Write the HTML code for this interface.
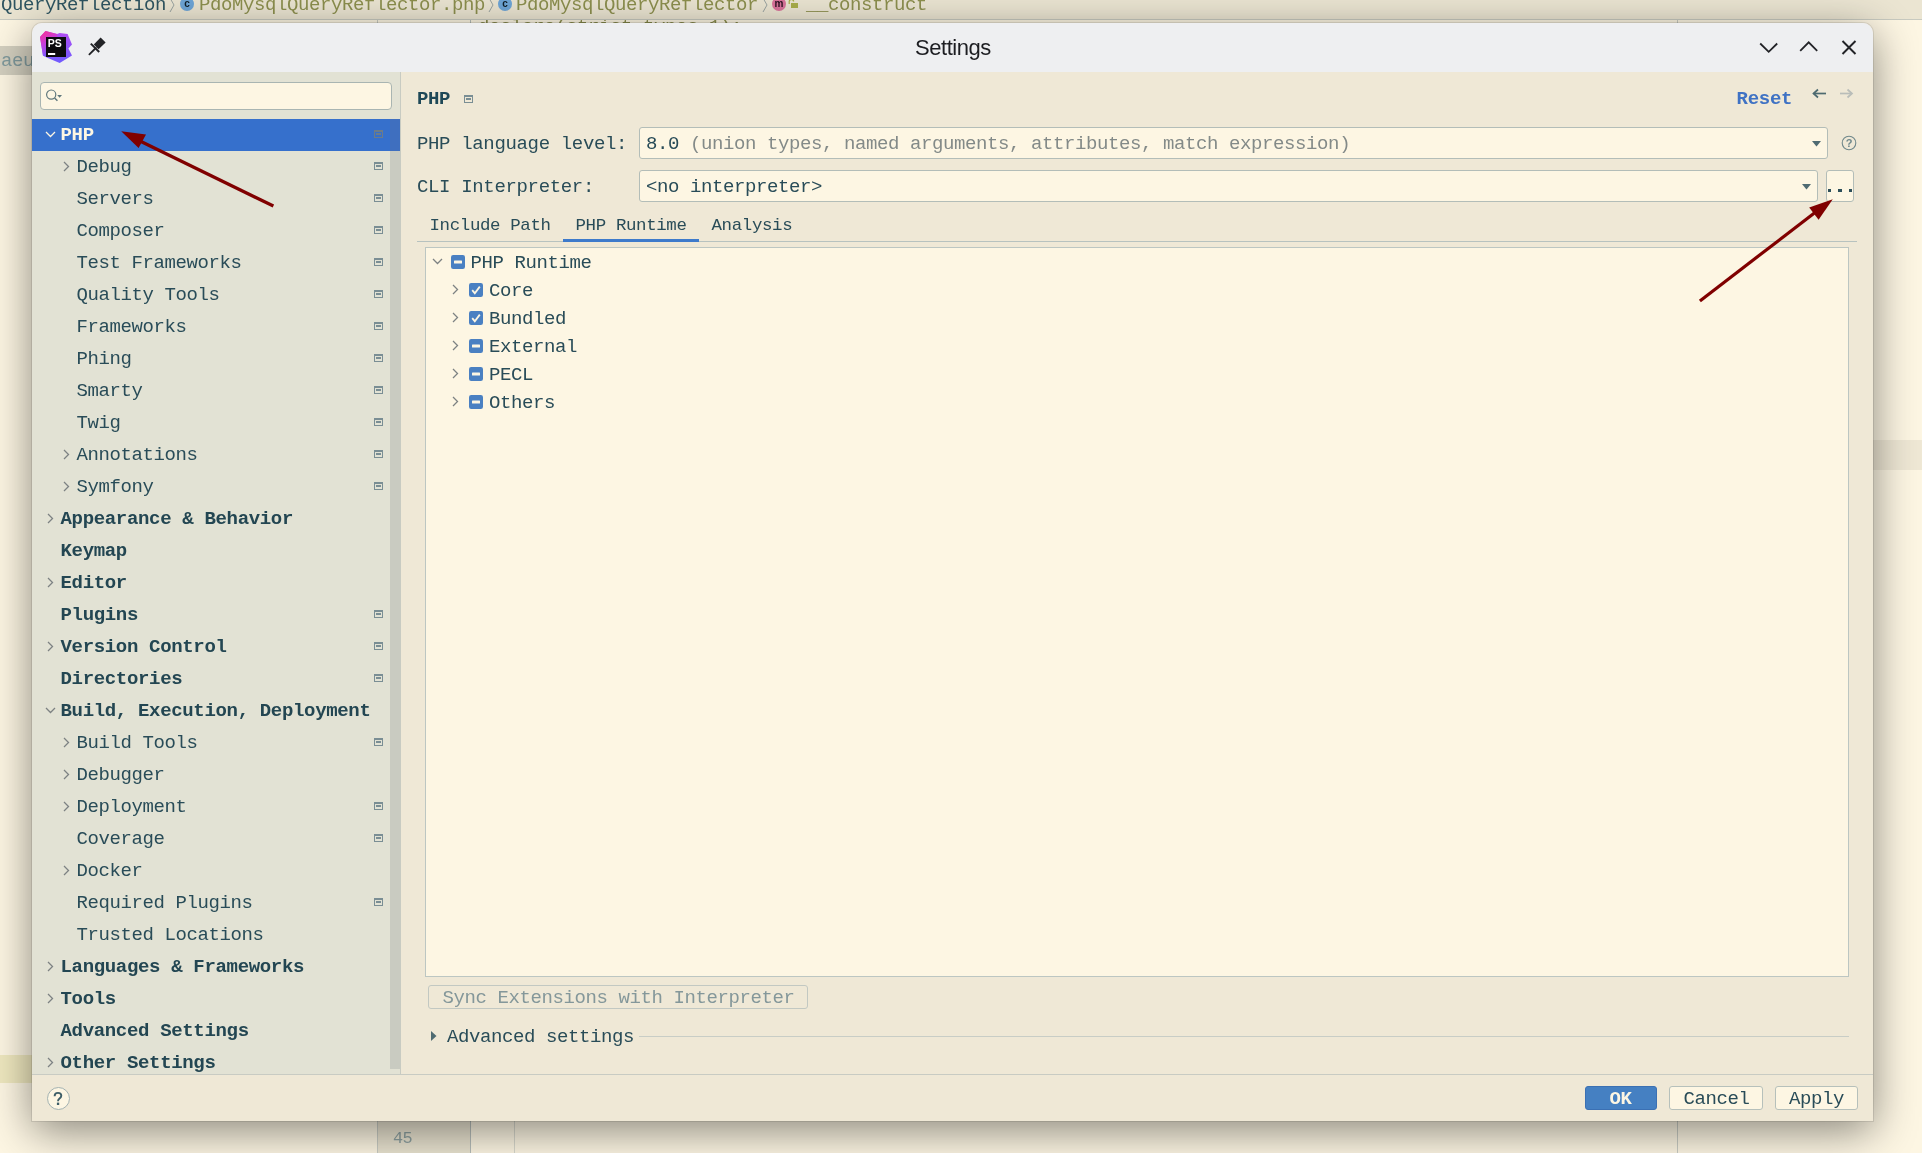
<!DOCTYPE html>
<html><head><meta charset="utf-8">
<style>
*{box-sizing:border-box;margin:0;padding:0}
html,body{width:1922px;height:1153px;overflow:hidden}
body{position:relative;background:#fdf6e3;font-family:"Liberation Mono";color:#294c58}
.a{position:absolute}
svg.a{overflow:visible}
.t{position:absolute;white-space:pre}
</style></head><body><div id="root" style="position:absolute;left:0;top:0;width:1922px;height:1153px;overflow:hidden;will-change:transform;background:#fdf6e3">
<div class="a" style="left:0px;top:0px;width:1922px;height:19px;background:#ebe5d2"></div>
<div class="a" style="left:0px;top:19px;width:1922px;height:1px;background:#c8cac0"></div>
<div class="t" style="left:1.00px;top:-3.97px;font-size:19.00px;line-height:19.00px;letter-spacing:-0.400px;color:#2f5561;">QueryReflection</div>
<svg class="a" style="left:169px;top:0px" width="7" height="13"><polyline points="1,-2 5,5 1,12" fill="none" stroke="#9aa3a0" stroke-width="1"/></svg>
<div class="a" style="left:180px;top:-3px;width:14px;height:14px;border-radius:7px;background:#6ea5d6;color:#10202a;font:bold 10px/13px 'Liberation Sans';text-align:center">c</div>
<div class="t" style="left:199.00px;top:-3.97px;font-size:19.00px;line-height:19.00px;letter-spacing:-0.400px;color:#8c8f4e;">PdoMysqlQueryReflector.php</div>
<svg class="a" style="left:488px;top:0px" width="7" height="13"><polyline points="1,-2 5,5 1,12" fill="none" stroke="#9aa3a0" stroke-width="1"/></svg>
<div class="a" style="left:498px;top:-3px;width:14px;height:14px;border-radius:7px;background:#6ea5d6;color:#10202a;font:bold 10px/13px 'Liberation Sans';text-align:center">c</div>
<div class="t" style="left:516.00px;top:-3.97px;font-size:19.00px;line-height:19.00px;letter-spacing:-0.400px;color:#8c8f4e;">PdoMysqlQueryReflector</div>
<svg class="a" style="left:762px;top:0px" width="7" height="13"><polyline points="1,-2 5,5 1,12" fill="none" stroke="#9aa3a0" stroke-width="1"/></svg>
<div class="a" style="left:772px;top:-3px;width:14px;height:14px;border-radius:7px;background:#d9739a;color:#2a1020;font:bold 10px/13px 'Liberation Sans';text-align:center">m</div>
<div class="a" style="left:791px;top:3px;width:7px;height:5px;background:#a9ae4a"></div>
<svg class="a" style="left:788px;top:-1px" width="8" height="6"><path d="M1.2,5 V2.6 A2.2,2.2 0 0 1 5.6,2.6" fill="none" stroke="#a9ae4a" stroke-width="1.2"/></svg>
<div class="t" style="left:806.00px;top:-3.97px;font-size:19.00px;line-height:19.00px;letter-spacing:-0.400px;color:#8c8f4e;">__construct</div>
<div class="a" style="left:377px;top:20px;width:1px;height:4px;background:#c9ccc3"></div>
<div class="a" style="left:470px;top:20px;width:1px;height:4px;background:#b9c0bb"></div>
<div class="a" style="left:1677px;top:20px;width:1px;height:4px;background:#c9ccc3"></div>
<div class="t" style="left:478.00px;top:18.03px;font-size:19.00px;line-height:19.00px;letter-spacing:-0.400px;color:#8c8f4e;">declare(strict_types=1);</div>
<div class="a" style="left:0px;top:19px;width:1922px;height:1px;background:#c8cac0"></div>
<div class="a" style="left:0px;top:46px;width:32px;height:29px;background:#d3cfbf"></div>
<div class="t" style="left:1.00px;top:52.03px;font-size:19.00px;line-height:19.00px;letter-spacing:-0.400px;color:#7f999c;">aeu</div>
<div class="a" style="left:0px;top:1055px;width:32px;height:28px;background:#efe8bf"></div>
<div class="a" style="left:1873px;top:440px;width:49px;height:30px;background:#efe8d5"></div>
<div class="a" style="left:377px;top:1121px;width:93px;height:40px;background:#e9e3d0"></div>
<div class="a" style="left:377px;top:1121px;width:1px;height:40px;background:#c9ccc3"></div>
<div class="a" style="left:470px;top:1121px;width:1px;height:40px;background:#b6bdb9"></div>
<div class="a" style="left:514px;top:1121px;width:1px;height:40px;background:#d8d8cc"></div>
<div class="a" style="left:1677px;top:1121px;width:1px;height:40px;background:#c9ccc3"></div>
<div class="t" style="left:393.00px;top:1131.15px;font-size:16.89px;line-height:16.89px;letter-spacing:-0.533px;color:#8da0a0;">45</div>
<div class="a" style="left:32px;top:23px;width:1841px;height:1098px;border-radius:10px 10px 0 0;box-shadow:0 0 0 1px rgba(0,0,0,0.09),0 10px 44px rgba(0,0,0,0.46);background:#efe8d6"></div>
<div class="a" style="left:32px;top:23px;width:1841px;height:49px;border-radius:10px 10px 0 0;background:#eeeff1"></div>
<svg class="a" style="left:40px;top:31px" width="32" height="32" viewBox="0 0 32 32">
<defs>
<linearGradient id="g1" x1="0" y1="0" x2="0.4" y2="1"><stop offset="0" stop-color="#ff318c"/><stop offset="0.55" stop-color="#c43fe0"/><stop offset="1" stop-color="#7a5cff"/></linearGradient>
<linearGradient id="g2" x1="0" y1="0" x2="0" y2="1"><stop offset="0" stop-color="#b54cf2"/><stop offset="1" stop-color="#6f5bff"/></linearGradient>
</defs>
<polygon points="0,6 5.5,0 17,3 19.7,2 27.6,3 32,13.6 28.4,17.6 32,24.5 19.7,32 9,27.5 3,24.7" fill="url(#g2)"/>
<polygon points="0,6 5.5,0 17,3 18,8 9,20 3,24.7" fill="url(#g1)"/>
<rect x="6" y="6" width="20" height="20" fill="#0b0a0e"/>
<text x="7.8" y="15.9" font-family="Liberation Sans" font-weight="bold" font-size="10.5" fill="#fff">PS</text>
<rect x="8" y="22" width="7.2" height="2" fill="#fff"/>
</svg>
<svg class="a" style="left:88px;top:37px" width="18" height="19" viewBox="0 0 18 19">
<polygon points="12.6,0.6 17.6,5.6 10.6,12.2 5.8,7.4" fill="#222327"/>
<line x1="2.8" y1="6.6" x2="11.2" y2="15" stroke="#222327" stroke-width="2"/>
<line x1="7.8" y1="11" x2="1.4" y2="17.4" stroke="#222327" stroke-width="1.8" stroke-linecap="round"/>
</svg>
<div class="t" style="left:915px;top:35.5px;font:22px/24px 'Liberation Sans';letter-spacing:-0.45px;color:#1d1e22">Settings</div>
<svg class="a" style="left:1759px;top:41px" width="100" height="16">
<polyline points="1.2,2.5 9.7,10.8 18.2,2.5" fill="none" stroke="#222327" stroke-width="1.8"/>
<polyline points="41.2,9.8 49.7,1.3 58.2,9.8" fill="none" stroke="#222327" stroke-width="1.8"/>
<line x1="83.5" y1="0" x2="96.5" y2="13" stroke="#222327" stroke-width="1.9"/>
<line x1="96.5" y1="0" x2="83.5" y2="13" stroke="#222327" stroke-width="1.9"/>
</svg>
<div class="a" style="left:32px;top:72px;width:368px;height:1002px;background:#e2e2d4"></div>
<div class="a" style="left:400px;top:72px;width:1px;height:1002px;background:#c8cbc2"></div>
<div class="a" style="left:40px;top:82px;width:352px;height:28px;background:#fdf6e3;border:1px solid #a9b5b2;border-radius:4px"></div>
<svg class="a" style="left:45px;top:88px" width="20" height="16">
<circle cx="6.2" cy="6.6" r="4.6" fill="none" stroke="#5f777c" stroke-width="1.2"/>
<line x1="9.6" y1="10" x2="12.4" y2="12.8" stroke="#5f777c" stroke-width="1.5"/>
<polygon points="12.2,7 17,7 14.6,9.8" fill="#5f777c"/>
</svg>
<div class="a" style="left:390px;top:119px;width:10px;height:950px;background:#c9cbc1"></div>
<div class="a" style="left:32px;top:119px;width:358px;height:32px;background:#3670cc"></div>
<div class="a" style="left:390px;top:119px;width:10px;height:32px;background:#3f6fbf"></div>
<div class="a" style="left:32px;top:72px;width:358px;height:1002px;overflow:hidden">
<div class="t" style="left:28.50px;top:54.03px;font-size:19.00px;line-height:19.00px;letter-spacing:-0.330px;font-weight:bold;color:#fdf6e3">PHP</div>
<svg class="a" style="left:13px;top:58.80000000000001px" width="12" height="8"><polyline points="1,1 5.5,5.5 10,1" fill="none" stroke="#fdf6e3" stroke-width="1.3"/></svg>
<svg class="a" style="left:342px;top:58px" width="9" height="8"><rect x="0.5" y="0.5" width="8" height="7" fill="none" stroke="#6c7c8a" stroke-width="1"/><rect x="0" y="0" width="9" height="2" fill="#6c7c8a"/><rect x="2" y="3" width="5" height="2" fill="#6c7c8a"/></svg>
<div class="t" style="left:44.50px;top:86.03px;font-size:19.00px;line-height:19.00px;letter-spacing:-0.400px;color:#294c58">Debug</div>
<svg class="a" style="left:31px;top:89.30000000000001px" width="8" height="12"><polyline points="1,1 5.5,5.5 1,10" fill="none" stroke="#7d8283" stroke-width="1.3"/></svg>
<svg class="a" style="left:342px;top:90px" width="9" height="8"><rect x="0.5" y="0.5" width="8" height="7" fill="none" stroke="#7a8e94" stroke-width="1"/><rect x="0" y="0" width="9" height="2" fill="#7a8e94"/><rect x="2" y="3" width="5" height="2" fill="#7a8e94"/></svg>
<div class="t" style="left:44.50px;top:118.03px;font-size:19.00px;line-height:19.00px;letter-spacing:-0.400px;color:#294c58">Servers</div>
<svg class="a" style="left:342px;top:122px" width="9" height="8"><rect x="0.5" y="0.5" width="8" height="7" fill="none" stroke="#7a8e94" stroke-width="1"/><rect x="0" y="0" width="9" height="2" fill="#7a8e94"/><rect x="2" y="3" width="5" height="2" fill="#7a8e94"/></svg>
<div class="t" style="left:44.50px;top:150.03px;font-size:19.00px;line-height:19.00px;letter-spacing:-0.400px;color:#294c58">Composer</div>
<svg class="a" style="left:342px;top:154px" width="9" height="8"><rect x="0.5" y="0.5" width="8" height="7" fill="none" stroke="#7a8e94" stroke-width="1"/><rect x="0" y="0" width="9" height="2" fill="#7a8e94"/><rect x="2" y="3" width="5" height="2" fill="#7a8e94"/></svg>
<div class="t" style="left:44.50px;top:182.03px;font-size:19.00px;line-height:19.00px;letter-spacing:-0.400px;color:#294c58">Test Frameworks</div>
<svg class="a" style="left:342px;top:186px" width="9" height="8"><rect x="0.5" y="0.5" width="8" height="7" fill="none" stroke="#7a8e94" stroke-width="1"/><rect x="0" y="0" width="9" height="2" fill="#7a8e94"/><rect x="2" y="3" width="5" height="2" fill="#7a8e94"/></svg>
<div class="t" style="left:44.50px;top:214.03px;font-size:19.00px;line-height:19.00px;letter-spacing:-0.400px;color:#294c58">Quality Tools</div>
<svg class="a" style="left:342px;top:218px" width="9" height="8"><rect x="0.5" y="0.5" width="8" height="7" fill="none" stroke="#7a8e94" stroke-width="1"/><rect x="0" y="0" width="9" height="2" fill="#7a8e94"/><rect x="2" y="3" width="5" height="2" fill="#7a8e94"/></svg>
<div class="t" style="left:44.50px;top:246.03px;font-size:19.00px;line-height:19.00px;letter-spacing:-0.400px;color:#294c58">Frameworks</div>
<svg class="a" style="left:342px;top:250px" width="9" height="8"><rect x="0.5" y="0.5" width="8" height="7" fill="none" stroke="#7a8e94" stroke-width="1"/><rect x="0" y="0" width="9" height="2" fill="#7a8e94"/><rect x="2" y="3" width="5" height="2" fill="#7a8e94"/></svg>
<div class="t" style="left:44.50px;top:278.03px;font-size:19.00px;line-height:19.00px;letter-spacing:-0.400px;color:#294c58">Phing</div>
<svg class="a" style="left:342px;top:282px" width="9" height="8"><rect x="0.5" y="0.5" width="8" height="7" fill="none" stroke="#7a8e94" stroke-width="1"/><rect x="0" y="0" width="9" height="2" fill="#7a8e94"/><rect x="2" y="3" width="5" height="2" fill="#7a8e94"/></svg>
<div class="t" style="left:44.50px;top:310.03px;font-size:19.00px;line-height:19.00px;letter-spacing:-0.400px;color:#294c58">Smarty</div>
<svg class="a" style="left:342px;top:314px" width="9" height="8"><rect x="0.5" y="0.5" width="8" height="7" fill="none" stroke="#7a8e94" stroke-width="1"/><rect x="0" y="0" width="9" height="2" fill="#7a8e94"/><rect x="2" y="3" width="5" height="2" fill="#7a8e94"/></svg>
<div class="t" style="left:44.50px;top:342.03px;font-size:19.00px;line-height:19.00px;letter-spacing:-0.400px;color:#294c58">Twig</div>
<svg class="a" style="left:342px;top:346px" width="9" height="8"><rect x="0.5" y="0.5" width="8" height="7" fill="none" stroke="#7a8e94" stroke-width="1"/><rect x="0" y="0" width="9" height="2" fill="#7a8e94"/><rect x="2" y="3" width="5" height="2" fill="#7a8e94"/></svg>
<div class="t" style="left:44.50px;top:374.03px;font-size:19.00px;line-height:19.00px;letter-spacing:-0.400px;color:#294c58">Annotations</div>
<svg class="a" style="left:31px;top:377.3px" width="8" height="12"><polyline points="1,1 5.5,5.5 1,10" fill="none" stroke="#7d8283" stroke-width="1.3"/></svg>
<svg class="a" style="left:342px;top:378px" width="9" height="8"><rect x="0.5" y="0.5" width="8" height="7" fill="none" stroke="#7a8e94" stroke-width="1"/><rect x="0" y="0" width="9" height="2" fill="#7a8e94"/><rect x="2" y="3" width="5" height="2" fill="#7a8e94"/></svg>
<div class="t" style="left:44.50px;top:406.03px;font-size:19.00px;line-height:19.00px;letter-spacing:-0.400px;color:#294c58">Symfony</div>
<svg class="a" style="left:31px;top:409.3px" width="8" height="12"><polyline points="1,1 5.5,5.5 1,10" fill="none" stroke="#7d8283" stroke-width="1.3"/></svg>
<svg class="a" style="left:342px;top:410px" width="9" height="8"><rect x="0.5" y="0.5" width="8" height="7" fill="none" stroke="#7a8e94" stroke-width="1"/><rect x="0" y="0" width="9" height="2" fill="#7a8e94"/><rect x="2" y="3" width="5" height="2" fill="#7a8e94"/></svg>
<div class="t" style="left:28.50px;top:438.03px;font-size:19.00px;line-height:19.00px;letter-spacing:-0.330px;font-weight:bold;color:#234652">Appearance &amp; Behavior</div>
<svg class="a" style="left:15px;top:441.29999999999995px" width="8" height="12"><polyline points="1,1 5.5,5.5 1,10" fill="none" stroke="#7d8283" stroke-width="1.3"/></svg>
<div class="t" style="left:28.50px;top:470.03px;font-size:19.00px;line-height:19.00px;letter-spacing:-0.330px;font-weight:bold;color:#234652">Keymap</div>
<div class="t" style="left:28.50px;top:502.03px;font-size:19.00px;line-height:19.00px;letter-spacing:-0.330px;font-weight:bold;color:#234652">Editor</div>
<svg class="a" style="left:15px;top:505.29999999999995px" width="8" height="12"><polyline points="1,1 5.5,5.5 1,10" fill="none" stroke="#7d8283" stroke-width="1.3"/></svg>
<div class="t" style="left:28.50px;top:534.03px;font-size:19.00px;line-height:19.00px;letter-spacing:-0.330px;font-weight:bold;color:#234652">Plugins</div>
<svg class="a" style="left:342px;top:538px" width="9" height="8"><rect x="0.5" y="0.5" width="8" height="7" fill="none" stroke="#7a8e94" stroke-width="1"/><rect x="0" y="0" width="9" height="2" fill="#7a8e94"/><rect x="2" y="3" width="5" height="2" fill="#7a8e94"/></svg>
<div class="t" style="left:28.50px;top:566.03px;font-size:19.00px;line-height:19.00px;letter-spacing:-0.330px;font-weight:bold;color:#234652">Version Control</div>
<svg class="a" style="left:15px;top:569.3px" width="8" height="12"><polyline points="1,1 5.5,5.5 1,10" fill="none" stroke="#7d8283" stroke-width="1.3"/></svg>
<svg class="a" style="left:342px;top:570px" width="9" height="8"><rect x="0.5" y="0.5" width="8" height="7" fill="none" stroke="#7a8e94" stroke-width="1"/><rect x="0" y="0" width="9" height="2" fill="#7a8e94"/><rect x="2" y="3" width="5" height="2" fill="#7a8e94"/></svg>
<div class="t" style="left:28.50px;top:598.03px;font-size:19.00px;line-height:19.00px;letter-spacing:-0.330px;font-weight:bold;color:#234652">Directories</div>
<svg class="a" style="left:342px;top:602px" width="9" height="8"><rect x="0.5" y="0.5" width="8" height="7" fill="none" stroke="#7a8e94" stroke-width="1"/><rect x="0" y="0" width="9" height="2" fill="#7a8e94"/><rect x="2" y="3" width="5" height="2" fill="#7a8e94"/></svg>
<div class="t" style="left:28.50px;top:630.03px;font-size:19.00px;line-height:19.00px;letter-spacing:-0.330px;font-weight:bold;color:#234652">Build, Execution, Deployment</div>
<svg class="a" style="left:13px;top:634.8px" width="12" height="8"><polyline points="1,1 5.5,5.5 10,1" fill="none" stroke="#7d8283" stroke-width="1.3"/></svg>
<div class="t" style="left:44.50px;top:662.03px;font-size:19.00px;line-height:19.00px;letter-spacing:-0.400px;color:#294c58">Build Tools</div>
<svg class="a" style="left:31px;top:665.3px" width="8" height="12"><polyline points="1,1 5.5,5.5 1,10" fill="none" stroke="#7d8283" stroke-width="1.3"/></svg>
<svg class="a" style="left:342px;top:666px" width="9" height="8"><rect x="0.5" y="0.5" width="8" height="7" fill="none" stroke="#7a8e94" stroke-width="1"/><rect x="0" y="0" width="9" height="2" fill="#7a8e94"/><rect x="2" y="3" width="5" height="2" fill="#7a8e94"/></svg>
<div class="t" style="left:44.50px;top:694.03px;font-size:19.00px;line-height:19.00px;letter-spacing:-0.400px;color:#294c58">Debugger</div>
<svg class="a" style="left:31px;top:697.3px" width="8" height="12"><polyline points="1,1 5.5,5.5 1,10" fill="none" stroke="#7d8283" stroke-width="1.3"/></svg>
<div class="t" style="left:44.50px;top:726.03px;font-size:19.00px;line-height:19.00px;letter-spacing:-0.400px;color:#294c58">Deployment</div>
<svg class="a" style="left:31px;top:729.3px" width="8" height="12"><polyline points="1,1 5.5,5.5 1,10" fill="none" stroke="#7d8283" stroke-width="1.3"/></svg>
<svg class="a" style="left:342px;top:730px" width="9" height="8"><rect x="0.5" y="0.5" width="8" height="7" fill="none" stroke="#7a8e94" stroke-width="1"/><rect x="0" y="0" width="9" height="2" fill="#7a8e94"/><rect x="2" y="3" width="5" height="2" fill="#7a8e94"/></svg>
<div class="t" style="left:44.50px;top:758.03px;font-size:19.00px;line-height:19.00px;letter-spacing:-0.400px;color:#294c58">Coverage</div>
<svg class="a" style="left:342px;top:762px" width="9" height="8"><rect x="0.5" y="0.5" width="8" height="7" fill="none" stroke="#7a8e94" stroke-width="1"/><rect x="0" y="0" width="9" height="2" fill="#7a8e94"/><rect x="2" y="3" width="5" height="2" fill="#7a8e94"/></svg>
<div class="t" style="left:44.50px;top:790.03px;font-size:19.00px;line-height:19.00px;letter-spacing:-0.400px;color:#294c58">Docker</div>
<svg class="a" style="left:31px;top:793.3px" width="8" height="12"><polyline points="1,1 5.5,5.5 1,10" fill="none" stroke="#7d8283" stroke-width="1.3"/></svg>
<div class="t" style="left:44.50px;top:822.03px;font-size:19.00px;line-height:19.00px;letter-spacing:-0.400px;color:#294c58">Required Plugins</div>
<svg class="a" style="left:342px;top:826px" width="9" height="8"><rect x="0.5" y="0.5" width="8" height="7" fill="none" stroke="#7a8e94" stroke-width="1"/><rect x="0" y="0" width="9" height="2" fill="#7a8e94"/><rect x="2" y="3" width="5" height="2" fill="#7a8e94"/></svg>
<div class="t" style="left:44.50px;top:854.03px;font-size:19.00px;line-height:19.00px;letter-spacing:-0.400px;color:#294c58">Trusted Locations</div>
<div class="t" style="left:28.50px;top:886.03px;font-size:19.00px;line-height:19.00px;letter-spacing:-0.330px;font-weight:bold;color:#234652">Languages &amp; Frameworks</div>
<svg class="a" style="left:15px;top:889.3px" width="8" height="12"><polyline points="1,1 5.5,5.5 1,10" fill="none" stroke="#7d8283" stroke-width="1.3"/></svg>
<div class="t" style="left:28.50px;top:918.03px;font-size:19.00px;line-height:19.00px;letter-spacing:-0.330px;font-weight:bold;color:#234652">Tools</div>
<svg class="a" style="left:15px;top:921.3px" width="8" height="12"><polyline points="1,1 5.5,5.5 1,10" fill="none" stroke="#7d8283" stroke-width="1.3"/></svg>
<div class="t" style="left:28.50px;top:950.03px;font-size:19.00px;line-height:19.00px;letter-spacing:-0.330px;font-weight:bold;color:#234652">Advanced Settings</div>
<div class="t" style="left:28.50px;top:982.03px;font-size:19.00px;line-height:19.00px;letter-spacing:-0.330px;font-weight:bold;color:#234652">Other Settings</div>
<svg class="a" style="left:15px;top:985.3px" width="8" height="12"><polyline points="1,1 5.5,5.5 1,10" fill="none" stroke="#7d8283" stroke-width="1.3"/></svg>
</div>
<div class="t" style="left:417.00px;top:90.03px;font-size:19.00px;line-height:19.00px;letter-spacing:-0.400px;font-weight:bold;color:#1e4857;">PHP</div>
<svg class="a" style="left:464px;top:95px" width="9" height="8"><rect x="0.5" y="0.5" width="8" height="7" fill="none" stroke="#7a8e94" stroke-width="1"/><rect x="0" y="0" width="9" height="2" fill="#7a8e94"/><rect x="2" y="3" width="5" height="2" fill="#7a8e94"/></svg>
<div class="t" style="left:1736.60px;top:90.03px;font-size:19.00px;line-height:19.00px;letter-spacing:-0.300px;font-weight:bold;color:#3f72c4;">Reset</div>
<svg class="a" style="left:1812px;top:88px" width="44" height="12">
<polyline points="6,1.5 1.5,5.5 6,9.5" fill="none" stroke="#4d6a70" stroke-width="1.7"/>
<line x1="1.5" y1="5.5" x2="14" y2="5.5" stroke="#4d6a70" stroke-width="1.7"/>
<polyline points="35.5,1.5 40,5.5 35.5,9.5" fill="none" stroke="#b9bdb9" stroke-width="1.7"/>
<line x1="28" y1="5.5" x2="40" y2="5.5" stroke="#b9bdb9" stroke-width="1.7"/>
</svg>
<div class="t" style="left:417.00px;top:135.03px;font-size:19.00px;line-height:19.00px;letter-spacing:-0.340px;">PHP language level:</div>
<div class="a" style="left:639px;top:127px;width:1189px;height:32px;background:#fdf6e3;border:1px solid #b3bdb8;border-radius:3px"></div>
<div class="t" style="left:646.00px;top:135.03px;font-size:19.00px;line-height:19.00px;letter-spacing:-0.400px;color:#294c58;">8.0 <span style="color:#838a88">(union types, named arguments, attributes, match expression)</span></div>
<svg class="a" style="left:1811.8px;top:140.6px" width="10" height="6"><polygon points="0,0 9,0 4.5,5.6" fill="#4f6b72"/></svg>
<svg class="a" style="left:1840px;top:135px" width="17" height="17">
<circle cx="9" cy="8" r="6.8" fill="none" stroke="#6f878b" stroke-width="1.1"/>
<text x="9" y="12" text-anchor="middle" font-family="Liberation Sans" font-weight="bold" font-size="11" fill="#6f878b">?</text>
</svg>
<div class="t" style="left:417.00px;top:178.03px;font-size:19.00px;line-height:19.00px;letter-spacing:-0.340px;">CLI Interpreter:</div>
<div class="a" style="left:639px;top:170px;width:1179px;height:32px;background:#fdf6e3;border:1px solid #b3bdb8;border-radius:3px"></div>
<div class="t" style="left:646.00px;top:178.03px;font-size:19.00px;line-height:19.00px;letter-spacing:-0.400px;">&lt;no interpreter&gt;</div>
<svg class="a" style="left:1802px;top:183.8px" width="10" height="6"><polygon points="0,0 9,0 4.5,5.6" fill="#4f6b72"/></svg>
<div class="a" style="left:1826px;top:170px;width:28px;height:32px;background:#fdf6e3;border:1px solid #b3bdb8;border-radius:3px"></div>
<div class="a" style="left:1827.5px;top:188.6px;width:3.4px;height:3.6px;background:#2d4f5a"></div>
<div class="a" style="left:1838.3px;top:188.6px;width:3.4px;height:3.6px;background:#2d4f5a"></div>
<div class="a" style="left:1849.1px;top:188.6px;width:3.4px;height:3.6px;background:#2d4f5a"></div>
<div class="a" style="left:417px;top:241px;width:1440px;height:1px;background:#b7c2bf"></div>
<div class="t" style="left:429.50px;top:216.95px;font-size:17.42px;line-height:17.42px;letter-spacing:-0.350px;">Include Path</div>
<div class="t" style="left:575.50px;top:216.95px;font-size:17.42px;line-height:17.42px;letter-spacing:-0.350px;">PHP Runtime</div>
<div class="t" style="left:711.50px;top:216.95px;font-size:17.42px;line-height:17.42px;letter-spacing:-0.350px;">Analysis</div>
<div class="a" style="left:563px;top:239px;width:136px;height:3px;background:#3d7acb"></div>
<div class="a" style="left:425px;top:247px;width:1424px;height:730px;background:#fdf6e3;border:1px solid #bcc6c2"></div>
<svg class="a" style="left:432px;top:258px" width="12" height="8"><polyline points="1,1 5.5,5.5 10,1" fill="none" stroke="#7d8283" stroke-width="1.3"/></svg>
<svg class="a" style="left:451px;top:255px" width="14" height="14"><rect x="0" y="0" width="14" height="14" rx="2.2" fill="#4a80c2"/><rect x="3" y="5.5" width="8" height="3" rx="0.5" fill="#fdf6e3"/></svg>
<div class="t" style="left:470.50px;top:254.03px;font-size:19.00px;line-height:19.00px;letter-spacing:-0.400px;">PHP Runtime</div>
<svg class="a" style="left:452px;top:284.2px" width="8" height="12"><polyline points="1,1 5.5,5.5 1,10" fill="none" stroke="#7d8283" stroke-width="1.3"/></svg>
<svg class="a" style="left:469px;top:283px" width="14" height="14"><rect x="0" y="0" width="14" height="14" rx="2.2" fill="#4a80c2"/><polyline points="3.2,7.2 5.8,10.2 10.8,3.6" fill="none" stroke="#fdf6e3" stroke-width="1.8"/></svg>
<div class="t" style="left:489.00px;top:282.03px;font-size:19.00px;line-height:19.00px;letter-spacing:-0.400px;">Core</div>
<svg class="a" style="left:452px;top:312.2px" width="8" height="12"><polyline points="1,1 5.5,5.5 1,10" fill="none" stroke="#7d8283" stroke-width="1.3"/></svg>
<svg class="a" style="left:469px;top:311px" width="14" height="14"><rect x="0" y="0" width="14" height="14" rx="2.2" fill="#4a80c2"/><polyline points="3.2,7.2 5.8,10.2 10.8,3.6" fill="none" stroke="#fdf6e3" stroke-width="1.8"/></svg>
<div class="t" style="left:489.00px;top:310.03px;font-size:19.00px;line-height:19.00px;letter-spacing:-0.400px;">Bundled</div>
<svg class="a" style="left:452px;top:340.2px" width="8" height="12"><polyline points="1,1 5.5,5.5 1,10" fill="none" stroke="#7d8283" stroke-width="1.3"/></svg>
<svg class="a" style="left:469px;top:339px" width="14" height="14"><rect x="0" y="0" width="14" height="14" rx="2.2" fill="#4a80c2"/><rect x="3" y="5.5" width="8" height="3" rx="0.5" fill="#fdf6e3"/></svg>
<div class="t" style="left:489.00px;top:338.03px;font-size:19.00px;line-height:19.00px;letter-spacing:-0.400px;">External</div>
<svg class="a" style="left:452px;top:368.2px" width="8" height="12"><polyline points="1,1 5.5,5.5 1,10" fill="none" stroke="#7d8283" stroke-width="1.3"/></svg>
<svg class="a" style="left:469px;top:367px" width="14" height="14"><rect x="0" y="0" width="14" height="14" rx="2.2" fill="#4a80c2"/><rect x="3" y="5.5" width="8" height="3" rx="0.5" fill="#fdf6e3"/></svg>
<div class="t" style="left:489.00px;top:366.03px;font-size:19.00px;line-height:19.00px;letter-spacing:-0.400px;">PECL</div>
<svg class="a" style="left:452px;top:396.2px" width="8" height="12"><polyline points="1,1 5.5,5.5 1,10" fill="none" stroke="#7d8283" stroke-width="1.3"/></svg>
<svg class="a" style="left:469px;top:395px" width="14" height="14"><rect x="0" y="0" width="14" height="14" rx="2.2" fill="#4a80c2"/><rect x="3" y="5.5" width="8" height="3" rx="0.5" fill="#fdf6e3"/></svg>
<div class="t" style="left:489.00px;top:394.03px;font-size:19.00px;line-height:19.00px;letter-spacing:-0.400px;">Others</div>
<div class="a" style="left:428px;top:985px;width:380px;height:24px;border:1px solid #c2c8c2;border-radius:3px"></div>
<div class="t" style="left:442.50px;top:988.73px;font-size:19.00px;line-height:19.00px;letter-spacing:-0.400px;color:#84979a;">Sync Extensions with Interpreter</div>
<svg class="a" style="left:431px;top:1031px" width="6" height="10"><polygon points="0,0 5.5,5 0,10" fill="#4f6b72"/></svg>
<div class="t" style="left:447.00px;top:1027.63px;font-size:19.00px;line-height:19.00px;letter-spacing:-0.400px;">Advanced settings</div>
<div class="a" style="left:639px;top:1036px;width:1210px;height:1px;background:#c8cdc6"></div>
<div class="a" style="left:32px;top:1074px;width:1841px;height:1px;background:#c8cbc3"></div>
<svg class="a" style="left:47px;top:1087px" width="23" height="23">
<circle cx="11.5" cy="11.5" r="11" fill="#fdf6e3" stroke="#a3b2b2" stroke-width="1"/>
</svg>
<svg class="a" style="left:53.3px;top:1092px" width="10" height="14"><path d="M1.6,4.2 C1.6,1.6 3.4,0.9 5,0.9 C7,0.9 8.3,2.1 8.3,3.8 C8.3,5.2 7.4,5.9 6.3,6.7 C5.4,7.4 5,7.9 5,9.2" fill="none" stroke="#3f5f68" stroke-width="1.9"/><rect x="3.9" y="10.6" width="2.3" height="2.4" fill="#3f5f68"/></svg>
<div class="a" style="left:1585px;top:1086px;width:72px;height:24px;background:#4580c2;border:1px solid #3b70b3;border-radius:3px"></div>
<div class="t" style="left:1609.50px;top:1090.03px;font-size:19.00px;line-height:19.00px;letter-spacing:-0.400px;font-weight:bold;color:#fdf6e3;">OK</div>
<div class="a" style="left:1669px;top:1086px;width:94px;height:24px;background:#fdf6e3;border:1px solid #b6c0bb;border-radius:3px"></div>
<div class="t" style="left:1683.50px;top:1090.03px;font-size:19.00px;line-height:19.00px;letter-spacing:-0.400px;">Cancel</div>
<div class="a" style="left:1775px;top:1086px;width:83px;height:24px;background:#fdf6e3;border:1px solid #b6c0bb;border-radius:3px"></div>
<div class="t" style="left:1789.00px;top:1090.03px;font-size:19.00px;line-height:19.00px;letter-spacing:-0.400px;">Apply</div>
<svg class="a" style="left:0;top:0" width="1922" height="1153">
<line x1="273.4" y1="206.1" x2="141" y2="141.5" stroke="#800000" stroke-width="3.3"/>
<polygon points="121.2,131.2 146,134.5 138.6,148.1" fill="#800000"/>
<line x1="1699.9" y1="300.9" x2="1817" y2="211" stroke="#800000" stroke-width="3.2"/>
<polygon points="1832.8,199.2 1809.2,207.5 1818.6,219.7" fill="#800000"/>
</svg>
</div></body></html>
